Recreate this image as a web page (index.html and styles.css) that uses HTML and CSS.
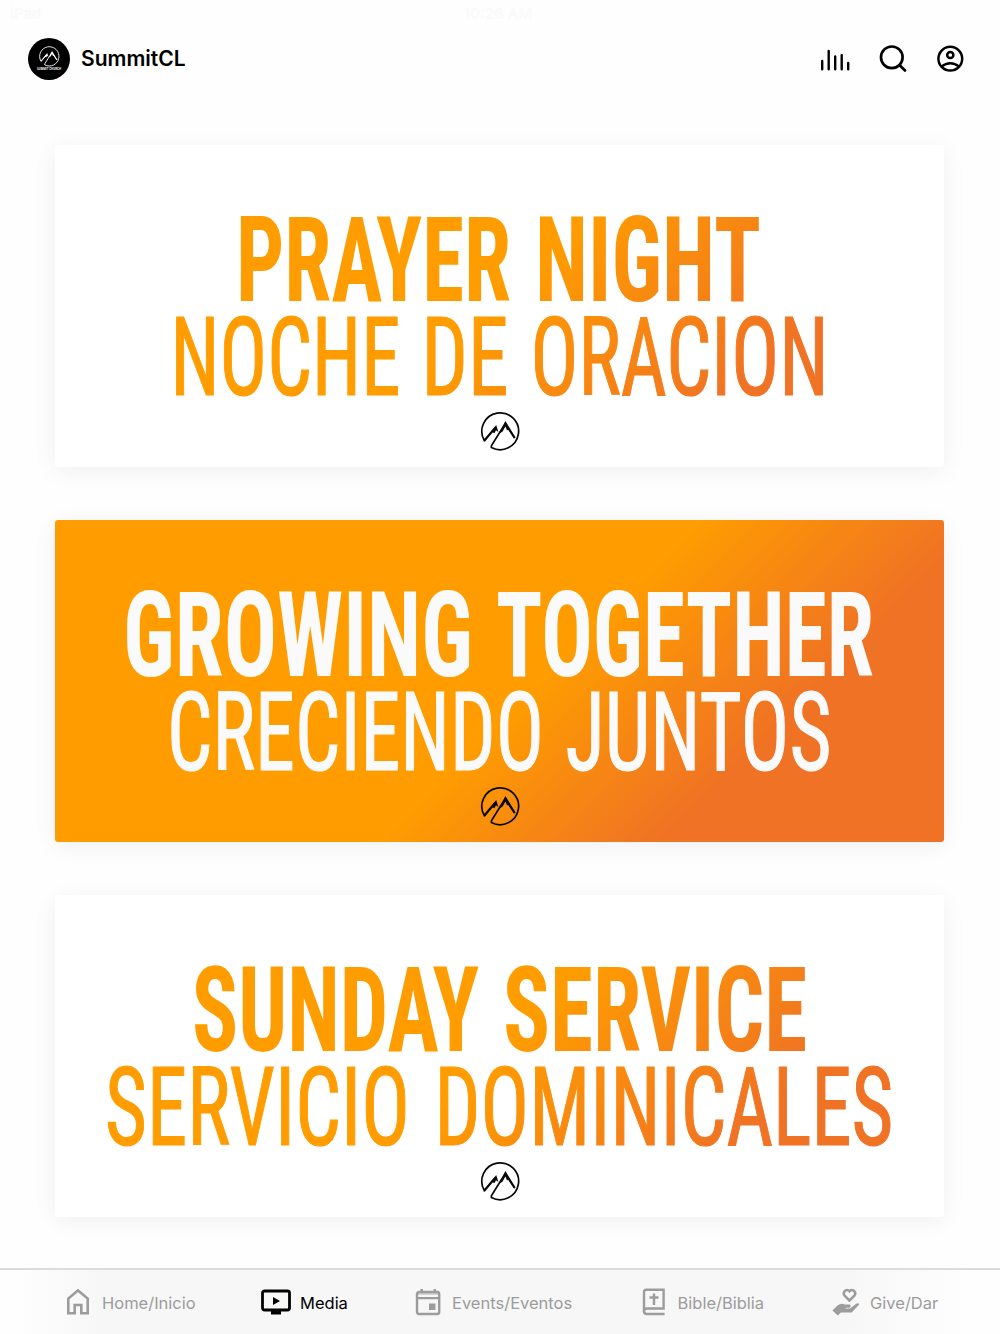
FILE: index.html
```
<!DOCTYPE html>
<html lang="en">
<head>
<meta charset="utf-8">
<title>SummitCL</title>
<link rel="stylesheet" href="styles.css">
</head>
<body>
<svg class="defs" width="0" height="0" aria-hidden="true">
  <defs>
    <linearGradient id="sunrise" gradientUnits="userSpaceOnUse" x1="448" y1="147" x2="613" y2="312">
      <stop offset="0" stop-color="#ff9d00"/>
      <stop offset="1" stop-color="#f07224"/>
    </linearGradient>
    <symbol id="summit" viewBox="0 0 40 40">
      <path d="M14.500 16L3.600 28.800A18.400 18.400 0 1 1 10.800 35.900Q10.400 34.500 11.600 33L24.600 12L34 26.500" fill="none" stroke="currentColor" stroke-width="1.700"/>
      <path d="M3 30L15.600 13.500L17.800 20.600L15.400 18.800L14 21.500L12 20.900L4.500 30Z" fill="currentColor"/>
      <path d="M24.800 9.500L35 26L33.500 27L27.500 18L26.500 19L24.800 15L22 20L19 22Z" fill="currentColor"/>
    </symbol>
  </defs>
</svg>
<div class="app">
  <div class="status"><span>iPad</span><span>10:26 AM</span><span></span></div>
  <header class="topbar">
    <div class="brand">
      <div class="avatar"><svg class="avatar-mark"><use href="#summit"/></svg><span class="avatar-name">SUMMIT CHURCH</span></div>
      <span class="brand-name">SummitCL</span>
    </div>
    <div class="actions">
      <svg width="32" height="32" viewBox="0 0 32 32" fill="none" stroke="#000" stroke-width="2.400" stroke-linecap="round"><path d="M4.200 18V26.200M10.700 8V26.200M17.200 13.500V26.200M23.700 12.300V26.200M30.200 20V26.200"/></svg>
      <svg width="30" height="30" viewBox="0 0 30 30" fill="none" stroke="#000" stroke-width="2.700" stroke-linecap="round"><circle cx="13.800" cy="13.300" r="10.800"/><path d="M21.700 21.200L27 26.500"/></svg>
      <svg width="28" height="28" viewBox="0 0 28 28" fill="none" stroke="#000" stroke-width="2.500"><circle cx="14.300" cy="13.700" r="11.900"/><circle cx="14.300" cy="10" r="3.100"/><path d="M5.800 21.400C10.800 17.100 17.800 17.100 22.800 21.400"/></svg>
    </div>
  </header>
  <main class="series">
    <section class="card">
      <svg class="art" viewBox="0 0 889 322" fill="url(#sunrise)">
        <g class="heavy"><text x="181" y="155.500" textLength="275" lengthAdjust="spacingAndGlyphs">PRAYER</text><text x="480" y="155.500" textLength="226" lengthAdjust="spacingAndGlyphs">NIGHT</text></g>
        <g class="light" stroke="url(#sunrise)"><text x="115.500" y="250" textLength="230" lengthAdjust="spacingAndGlyphs">NOCHE</text><text x="366.500" y="250" textLength="87" lengthAdjust="spacingAndGlyphs">DE</text><text x="475.500" y="250" textLength="298" lengthAdjust="spacingAndGlyphs">ORACION</text></g>
        <use class="mark" href="#summit" x="425.600" y="266.500" width="40" height="40"/>
      </svg>
    </section>
    <section class="card card-warm">
      <svg class="art" viewBox="0 0 889 322" fill="#fafafa">
        <g class="heavy"><text x="68" y="155.500" textLength="350" lengthAdjust="spacingAndGlyphs">GROWING</text><text x="441" y="155.500" textLength="378" lengthAdjust="spacingAndGlyphs">TOGETHER</text></g>
        <g class="light" stroke="#fafafa"><text x="112" y="250" textLength="377" lengthAdjust="spacingAndGlyphs">CRECIENDO</text><text x="510.500" y="250" textLength="266" lengthAdjust="spacingAndGlyphs">JUNTOS</text></g>
        <use class="mark" href="#summit" x="425.600" y="266.500" width="40" height="40"/>
      </svg>
    </section>
    <section class="card">
      <svg class="art" viewBox="0 0 889 322" fill="url(#sunrise)">
        <g class="heavy"><text x="137" y="155.500" textLength="287" lengthAdjust="spacingAndGlyphs">SUNDAY</text><text x="448" y="155.500" textLength="304" lengthAdjust="spacingAndGlyphs">SERVICE</text></g>
        <g class="light" stroke="url(#sunrise)"><text x="50" y="250" textLength="305" lengthAdjust="spacingAndGlyphs">SERVICIO</text><text x="379.500" y="250" textLength="459" lengthAdjust="spacingAndGlyphs">DOMINICALES</text></g>
        <use class="mark" href="#summit" x="425.600" y="266.500" width="40" height="40"/>
      </svg>
    </section>
  </main>
  <nav class="tabs">
    <a class="tab tab-home"><svg width="26" height="28" viewBox="0 0 26 28" fill="none" stroke="currentColor" stroke-width="2.600"><path d="M3.300 25.300V10.500L13 2.500L22.700 10.500V25.300H16.300V17H9.700V25.300Z"/></svg><span>Home/Inicio</span></a>
    <a class="tab tab-media"><svg width="32" height="28" viewBox="0 0 32 28"><rect x="2.500" y="3" width="27" height="19" rx="2" fill="none" stroke="currentColor" stroke-width="2.800"/><path d="M13 9L20 13L13 17ZM11 22.500H21V26.500H11Z" fill="currentColor"/></svg><span>Media</span></a>
    <a class="tab tab-events"><svg width="26" height="28" viewBox="0 0 26 28"><path d="M2 4H24V7H2Z" fill="currentColor" opacity=".4"/><rect x="2" y="4" width="22.200" height="22" rx="2" fill="none" stroke="currentColor" stroke-width="2.400"/><path d="M5.500 1H8V5H5.500ZM18.500 1H21V5H18.500ZM2 9H24V11.300H2ZM14 15.500H20.500V22H14Z" fill="currentColor"/></svg><span>Events/Eventos</span></a>
    <a class="tab tab-bible"><svg width="24" height="28" viewBox="0 0 24 28" fill="none" stroke="currentColor" stroke-width="2.400"><path d="M3 24V4Q3 1.800 5.200 1.800H22.600V20.500H6Q3 20.500 3 23.300Q3 26 6 26H23.600M13 5.500V17M8.500 9.500H17.500"/></svg><span>Bible/Biblia</span></a>
    <a class="tab tab-give"><svg width="28" height="28" viewBox="0 0 28 28"><path d="M17.500 12.500L12.600 7.600C9.900 4.300 14.700-.1 17.500 3.200C20.300-.1 25.100 4.300 22.400 7.600Z" fill="none" stroke="currentColor" stroke-width="2.500"/><path d="M.4 22.400L4.200 18.700C7.500 15.500 10 15.400 12.600 16.500H17.700Q19.600 18.300 17.700 19.700H13.600V20.500H18L24.600 15.500Q26.900 14.600 27.200 16.600L19.700 24.500H8.800L5.800 27.500Z" fill="currentColor"/></svg><span>Give/Dar</span></a>
  </nav>
</div>
</body>
</html>
```
FILE: styles.css
```
* { box-sizing: border-box; }
body { margin: 0; background: #fefefe; font-family: Inter, "Liberation Sans", sans-serif; color: #000; }
.defs { display: block; height: 0; }
.app { height: 1334px; display: flex; flex-direction: column; overflow: hidden; }
.status { height: 28px; padding: 4px 14px 4px 10px; display: grid; grid-template-columns: 1fr auto 1fr; font-size: 15px; font-weight: 600; line-height: 20px; color: #fafafa; }
.topbar { height: 62px; padding: 0 36px 0 28px; display: flex; justify-content: space-between; align-items: center; }
.brand { display: flex; align-items: center; gap: 11px; }
.avatar { width: 42px; height: 42px; border-radius: 50%; background: #000; color: #fff; display: flex; flex-direction: column; align-items: center; padding-top: 8px; }
.avatar-mark { width: 21px; height: 21px; flex: none; }
.avatar-name { font-family: Roboto, sans-serif; font-stretch: 75%; font-size: 3.400px; line-height: 4px; font-weight: 500; white-space: nowrap; }
.brand-name { font-size: 21px; font-weight: 600; letter-spacing: 0; padding-bottom: 2px; }
.actions { display: flex; align-items: center; gap: 28px; }
.series { flex: 1; padding: 55px 56px 0 55px; display: flex; flex-direction: column; gap: 53px; min-height: 0; }
.card { flex: none; height: 322px; border-radius: 3px; background: #fff; box-shadow: 0 4px 24px rgba(0,0,0,.06); }
.card-warm { background: linear-gradient(135deg, #ff9d00 53%, #f48019 69%, #f07224 77%); }
.art { display: block; width: 889px; height: 322px; overflow: visible; font-family: Roboto, sans-serif; font-stretch: 75%; }
.heavy { font-size: 118px; font-weight: 700; }
.light { font-size: 109.500px; font-weight: 400; stroke-width: 1.200px; }
.mark { color: #080808; }
.tabs { height: 66px; padding-top: 1px; border-top: 2px solid #dcdcdc; background: linear-gradient(90deg, #fefefe 2%, #f7f7f7 10%, #f7f7f7 84%, #fefefe 97%); display: flex; color: #9c9c9c; font-size: 16.500px; }
.tab { display: flex; align-items: center; gap: 11px; white-space: nowrap; }
.tab svg { flex: none; margin-top: -2px; }
.tab span { padding-top: 1px; }
.tab-home { width: 195px; margin-left: 65px; }
.tab-media { width: 155px; gap: 8px; color: #000; }
.tab-events { width: 226px; }
.tab-bible { width: 191px; gap: 12.500px; }
.tab-give { gap: 10px; }
```
